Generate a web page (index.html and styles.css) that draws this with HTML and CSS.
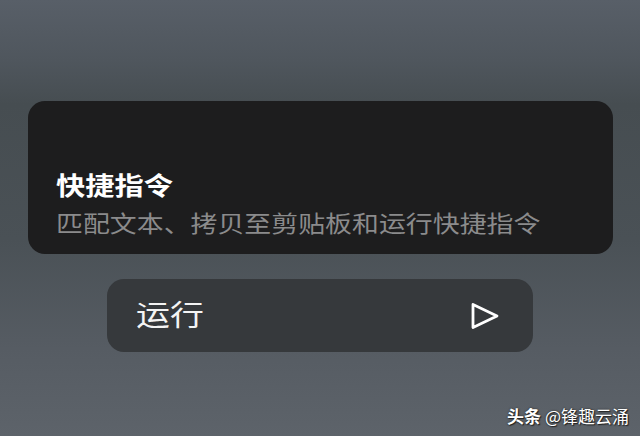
FILE: index.html
```html
<!DOCTYPE html>
<html lang="zh-CN">

<head>
    <meta charset="UTF-8">
    <meta name="viewport" content="width=device-width, initial-scale=1.0">
    <title>快捷指令</title>
    <link rel="stylesheet" href="styles.css">
</head>

<body>
    <div class="screen">
        <div class="shortcut-card">
            <div class="card-title"><span class="wide">快捷指令</span></div>
            <div class="card-desc"><span class="wide">匹配文本、拷贝至剪贴板和运行快捷指令</span></div>
        </div>
        <div class="run-row">
            <button class="run-btn">
                <span class="run-label"><span class="wide">运行</span></span>
                <svg class="play-icon" width="30" height="28" viewBox="0 0 30 28">
                    <path d="M3 2.5 L27 14 L3 25.5 Z" fill="none" stroke="#ffffff" stroke-width="2.8" stroke-linejoin="round"/>
                </svg>
            </button>
        </div>
    </div>
    <div class="watermark"><b>头条</b> @锋趣云涌</div>
</body>

</html>
```

FILE: styles.css
```css
body {
    margin: 0;
    height: 436px;
    overflow: hidden;
    font-family: "Noto Sans CJK SC", "Noto Sans", sans-serif;
    background: linear-gradient(180deg, #585f68 0%, #4f565d 14%, #464d51 24%, #4a5156 55%, #565c63 80%, #5d636a 100%);
    position: relative;
}

.screen {
    padding-top: 101px;
    padding-left: 28px;
}

/* 横に少し引き伸ばされた文字 */
.wide {
    display: inline-block;
    transform: scaleX(1.17);
    transform-origin: left center;
    white-space: nowrap;
}

.shortcut-card {
    width: 585px;
    height: 153px;
    box-sizing: border-box;
    background-color: #1d1d1e;
    border-radius: 17px;
    display: flex;
    flex-direction: column;
    justify-content: flex-end;
    gap: 8px;
    padding: 0 0 17px 28px;
}

.card-title {
    color: #ffffff;
    font-size: 25px;
    font-weight: 700;
    line-height: 30px;
}

.card-desc {
    color: #8b8b8c;
    font-size: 23px;
    line-height: 30px;
}

.run-row {
    margin-top: 25px;
    padding-left: 79px;
}

.run-btn {
    width: 426px;
    height: 73px;
    box-sizing: border-box;
    border: none;
    border-radius: 17px;
    background-color: #36393c;
    display: flex;
    align-items: center;
    justify-content: space-between;
    padding: 0 33px 0 29px;
    font-family: inherit;
    cursor: pointer;
}

.run-label {
    color: #f4f4f4;
    font-size: 29px;
    line-height: 34px;
    padding-bottom: 5px;
}

.play-icon {
    display: block;
}

.watermark {
    position: absolute;
    right: 11px;
    bottom: 10px;
    color: #ffffff;
    font-size: 17px;
    line-height: 20px;
    text-shadow: 0 0 2px #222222, 1px 1px 1px #222222;
}
```
